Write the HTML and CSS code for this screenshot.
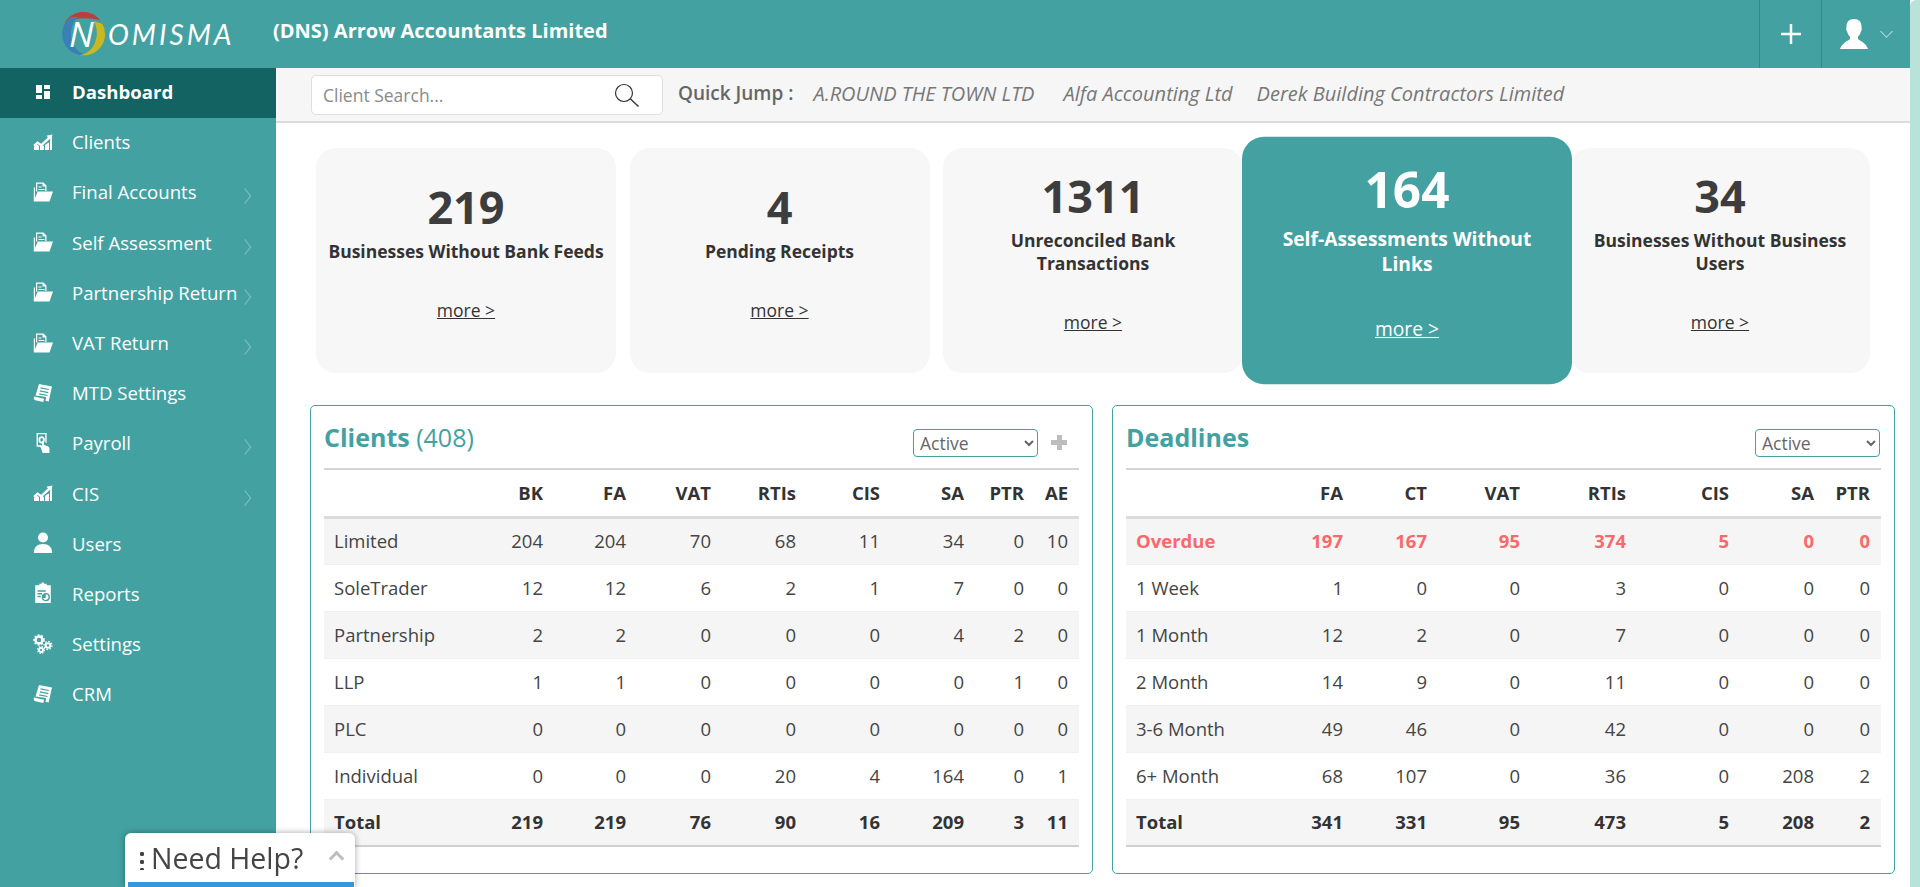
FILE: index.html
```html
<!DOCTYPE html>
<html lang="en">
<head>
    <meta charset="UTF-8">
    <meta name="viewport" content="width=device-width, initial-scale=1.0">
    <title>Nomisma Dashboard</title>
    <link rel="stylesheet" href="styles.css">
</head>
<body>
    <!-- Icon sprite -->
    <svg class="sprite" xmlns="http://www.w3.org/2000/svg">
        <symbol id="i-dash" viewBox="0 0 20 20">
            <path d="M3 3h6v8H3zM11 3h6v4h-6zM11 9h6v8h-6zM3 13h6v4H3z"/>
        </symbol>
        <symbol id="i-chart" viewBox="0 0 20 20">
            <path d="M1 18v-3l3-2.500L6 14v4zM7 18v-4l2-1 2 1v4zM12 18v-5l2-1.500 2-1V18zM17 18V8l2-1V18z"/>
            <path d="M.4 13l4-3.800 3.800 2.600 6.800-6.500-1.600-1.600 6-1.200-.9 6-1.700-1.600-8.500 7.800-3.800-2.700-3 2.700z"/>
        </symbol>
        <symbol id="i-folder" viewBox="0 0 20 20">
            <path class="faint" d="M3 .5h7.500l3 3V9h-1.200V4.500H9.500V1.700H4.200V9.500H3zM5.500 4.500h3v1h-3zM5.500 7h6v1h-6z"/>
            <path d="M.8 5.500H2V16l2.700-6.500H20L16.500 19.500H.8z"/>
        </symbol>
        <symbol id="i-receipt" viewBox="0 0 20 20">
            <path fill-rule="evenodd" d="M6 1l13 2.500-3.300 15-3.300-.7.700-2.300c.2-1-.5-1.500-1.300-1.700L2.500 12.500zM7.600 4.200l-.3 1.200 8.400 1.700.3-1.200zM7 7.300l-.3 1.200 8.400 1.700.3-1.200zM6.300 10.200L6 11.400l8.400 1.700.3-1.200z"/>
            <path d="M1 13.500l10 2.200-.7 3.300-8-1.700C.8 16.800.4 15 1 13.500z"/>
        </symbol>
        <symbol id="i-pay" viewBox="0 0 20 24">
            <path fill-rule="evenodd" d="M3 1h11v11l-1.500-.8V2.500H4.500v12H7V16H3zM8.500 4.500a3.500 4 0 1 1 0 8 3.500 4 0 0 1 0-8zM8.500 6.500a1.500 2 0 1 0 0 4 1.500 2 0 0 0 0-4z"/>
            <path d="M9 10.500c0-1 2-1 2 0V14l4 1.500c1.200.5 2 1.200 2 2.500v5H9.500L8 18l-1.500-2.500c-.4-1 1-1.800 1.700-1l.8 1z"/>
        </symbol>
        <symbol id="i-user" viewBox="0 0 20 24">
            <circle cx="10" cy="6" r="5.500"/>
            <path d="M0 23c0-7 4-10 10-10s10 3 10 10z"/>
        </symbol>
        <symbol id="i-report" viewBox="0 0 20 24">
            <path fill-rule="evenodd" d="M1.500 3.500H6V2h2.500V.5H11V2h3v1.500h4.500V23h-17zM4 9v1.500h9V9zM4 12v1.500h5V12zM4 15v1.500h3.500V15zM13 12a4.500 4.500 0 1 0 0 9 4.500 4.500 0 0 0 0-9zM13 13.500a3 3 0 1 1-2.800 4h2.800z"/>
        </symbol>
        <symbol id="i-gears" viewBox="0 0 20 20">
            <g fill="none" stroke="#fff">
                <circle cx="6" cy="6" r="3.500" stroke-width="2.500"/>
                <circle cx="6" cy="6" r="5" stroke-width="1.500" stroke-dasharray="1.800 1.800"/>
                <circle cx="15" cy="11.500" r="2.300" stroke-width="2"/>
                <circle cx="15" cy="11.500" r="4" stroke-width="1.300" stroke-dasharray="1.500 1.600"/>
                <circle cx="8" cy="16" r="2" stroke-width="1.800"/>
                <circle cx="8" cy="16" r="3.400" stroke-width="1.200" stroke-dasharray="1.400 1.300"/>
            </g>
        </symbol>
    </svg>

    <div class="page">
        <header class="topbar">
            <div class="logo">
                <svg class="logo-ring" viewBox="0 0 44 44" xmlns="http://www.w3.org/2000/svg">
                    <path fill="#b9403f" d="M3 11A21.500 21.500 0 0 1 39 8.500C28 5 14 5 3 11z"/>
                    <path fill="#3a80b4" d="M9 5A21.500 21.500 0 0 0 25 43.300C15 40 9.500 32 9.500 22 9.500 15 12 9 17 5z"/>
                    <path fill="#c9b81f" d="M41 12A21.500 21.500 0 0 1 18 43.200C27 42 33.500 35 35 25 36 19 35 14 32 9z"/>
                </svg>
                <span class="logo-n">N</span>
                <span class="logo-text">OMISMA</span>
            </div>
            <div class="company">(DNS) Arrow Accountants Limited</div>
            <div class="topbar-btn topbar-plus">
                <svg width="20" height="20" viewBox="0 0 20 20" xmlns="http://www.w3.org/2000/svg"><path d="M10 0v20M0 10h20" stroke="#fff" stroke-width="2.500"/></svg>
            </div>
            <div class="topbar-btn topbar-user">
                <svg width="28" height="30" viewBox="0 0 28 30" xmlns="http://www.w3.org/2000/svg">
                    <path fill="#fff" d="M14 0c5 0 7.500 3 7.500 7.500 0 1.500.5 2 .2 3.500-.3 1-.8 1.300-1 2-.5 2-1.500 3.500-2.700 4.500v2.500c3 2.500 7.500 3.500 10 10H0c2.500-6.500 7-7.500 10-10v-2.500c-1.200-1-2.200-2.500-2.700-4.500-.2-.7-.7-1-1-2-.3-1.500.2-2 .2-3.500C6.500 3 9 0 14 0z"/>
                </svg>
                <span class="chev-down"></span>
            </div>
        </header>

        <div class="layout">
            <nav class="sidebar">
                <a class="nav-item active"><svg class="nav-icon"><use href="#i-dash"/></svg>Dashboard</a>
                <a class="nav-item"><svg class="nav-icon"><use href="#i-chart"/></svg>Clients</a>
                <a class="nav-item"><svg class="nav-icon"><use href="#i-folder"/></svg>Final Accounts<span class="chev"></span></a>
                <a class="nav-item"><svg class="nav-icon"><use href="#i-folder"/></svg>Self Assessment<span class="chev"></span></a>
                <a class="nav-item"><svg class="nav-icon"><use href="#i-folder"/></svg>Partnership Return<span class="chev"></span></a>
                <a class="nav-item"><svg class="nav-icon"><use href="#i-folder"/></svg>VAT Return<span class="chev"></span></a>
                <a class="nav-item"><svg class="nav-icon"><use href="#i-receipt"/></svg>MTD Settings</a>
                <a class="nav-item"><svg class="nav-icon"><use href="#i-pay"/></svg>Payroll<span class="chev"></span></a>
                <a class="nav-item"><svg class="nav-icon"><use href="#i-chart"/></svg>CIS<span class="chev"></span></a>
                <a class="nav-item"><svg class="nav-icon"><use href="#i-user"/></svg>Users</a>
                <a class="nav-item"><svg class="nav-icon"><use href="#i-report"/></svg>Reports</a>
                <a class="nav-item"><svg class="nav-icon"><use href="#i-gears"/></svg>Settings</a>
                <a class="nav-item"><svg class="nav-icon"><use href="#i-receipt"/></svg>CRM</a>
            </nav>

            <main class="content">
                <!-- Search and quick jump -->
                <div class="subbar">
                    <div class="search">
                        <input class="search-input" type="text" placeholder="Client Search...">
                        <svg width="26" height="24" viewBox="0 0 26 24" xmlns="http://www.w3.org/2000/svg">
                            <circle cx="10" cy="10" r="8.500" fill="none" stroke="#333" stroke-width="1.200"/>
                            <path d="M16.500 16l8 7.500" stroke="#333" stroke-width="1.400"/>
                        </svg>
                    </div>
                    <span class="jump-label">Quick Jump :</span>
                    <a class="jump-link">A.ROUND THE TOWN LTD</a>
                    <a class="jump-link">Alfa Accounting Ltd</a>
                    <a class="jump-link">Derek Building Contractors Limited</a>
                </div>

                <!-- Cards -->
                <section class="cards">
                    <div class="card">
                        <div class="card-num">219</div>
                        <div class="card-label">Businesses Without Bank Feeds</div>
                        <a class="card-more">more &gt;</a>
                    </div>
                    <div class="card">
                        <div class="card-num">4</div>
                        <div class="card-label">Pending Receipts</div>
                        <a class="card-more">more &gt;</a>
                    </div>
                    <div class="card">
                        <div class="card-num">1311</div>
                        <div class="card-label">Unreconciled Bank<br>Transactions</div>
                        <a class="card-more">more &gt;</a>
                    </div>
                    <div class="card card-active">
                        <div class="card-num">164</div>
                        <div class="card-label">Self-Assessments Without<br>Links</div>
                        <a class="card-more">more &gt;</a>
                    </div>
                    <div class="card">
                        <div class="card-num">34</div>
                        <div class="card-label">Businesses Without Business<br>Users</div>
                        <a class="card-more">more &gt;</a>
                    </div>
                </section>

                <!-- Tables -->
                <section class="panels">
                    <div class="panel">
                        <div class="panel-head">
                            <h2 class="panel-title">Clients <span class="panel-count">(408)</span></h2>
                            <select class="panel-select"><option>Active</option></select>
                            <span class="panel-plus"></span>
                        </div>
                        <table class="grid grid-clients">
                            <thead>
                                <tr><th></th><th>BK</th><th>FA</th><th>VAT</th><th>RTIs</th><th>CIS</th><th>SA</th><th>PTR</th><th>AE</th></tr>
                            </thead>
                            <tbody>
                                <tr><td>Limited</td><td>204</td><td>204</td><td>70</td><td>68</td><td>11</td><td>34</td><td>0</td><td>10</td></tr>
                                <tr><td>SoleTrader</td><td>12</td><td>12</td><td>6</td><td>2</td><td>1</td><td>7</td><td>0</td><td>0</td></tr>
                                <tr><td>Partnership</td><td>2</td><td>2</td><td>0</td><td>0</td><td>0</td><td>4</td><td>2</td><td>0</td></tr>
                                <tr><td>LLP</td><td>1</td><td>1</td><td>0</td><td>0</td><td>0</td><td>0</td><td>1</td><td>0</td></tr>
                                <tr><td>PLC</td><td>0</td><td>0</td><td>0</td><td>0</td><td>0</td><td>0</td><td>0</td><td>0</td></tr>
                                <tr><td>Individual</td><td>0</td><td>0</td><td>0</td><td>20</td><td>4</td><td>164</td><td>0</td><td>1</td></tr>
                                <tr class="row-total"><td>Total</td><td>219</td><td>219</td><td>76</td><td>90</td><td>16</td><td>209</td><td>3</td><td>11</td></tr>
                            </tbody>
                        </table>
                    </div>

                    <div class="panel">
                        <div class="panel-head">
                            <h2 class="panel-title">Deadlines</h2>
                            <select class="panel-select"><option>Active</option></select>
                        </div>
                        <table class="grid grid-deadlines">
                            <thead>
                                <tr><th></th><th>FA</th><th>CT</th><th>VAT</th><th>RTIs</th><th>CIS</th><th>SA</th><th>PTR</th></tr>
                            </thead>
                            <tbody>
                                <tr class="row-overdue"><td>Overdue</td><td>197</td><td>167</td><td>95</td><td>374</td><td>5</td><td>0</td><td>0</td></tr>
                                <tr><td>1 Week</td><td>1</td><td>0</td><td>0</td><td>3</td><td>0</td><td>0</td><td>0</td></tr>
                                <tr><td>1 Month</td><td>12</td><td>2</td><td>0</td><td>7</td><td>0</td><td>0</td><td>0</td></tr>
                                <tr><td>2 Month</td><td>14</td><td>9</td><td>0</td><td>11</td><td>0</td><td>0</td><td>0</td></tr>
                                <tr><td>3-6 Month</td><td>49</td><td>46</td><td>0</td><td>42</td><td>0</td><td>0</td><td>0</td></tr>
                                <tr><td>6+ Month</td><td>68</td><td>107</td><td>0</td><td>36</td><td>0</td><td>208</td><td>2</td></tr>
                                <tr class="row-total"><td>Total</td><td>341</td><td>331</td><td>95</td><td>473</td><td>5</td><td>208</td><td>2</td></tr>
                            </tbody>
                        </table>
                    </div>
                </section>
            </main>
        </div>
    </div>

    <div class="scroll-rail"></div>

    <!-- Help widget -->
    <div class="help">
        <span class="help-dots"></span>
        <span class="help-text">Need Help?</span>
        <span class="help-chev"></span>
    </div>
</body>
</html>
```

FILE: styles.css
```css
/* General */
* {
    box-sizing: border-box;
}

html, body {
    height: 100%;
}

body {
    margin: 0;
    display: flex;
    overflow: hidden;
    background-color: white;
    color: #333;
    font-family: "Open Sans", "Liberation Sans", sans-serif;
}

.sprite {
    display: none;
}

.page {
    flex: 1;
    min-width: 0;
    display: flex;
    flex-direction: column;
}

.scroll-rail {
    width: 10px;
    background-color: #b9e3d8;
    border-top-left-radius: 6px;
}

/* Top bar */
.topbar {
    height: 68px;
    flex-shrink: 0;
    display: flex;
    align-items: stretch;
    background-color: #43a1a1;
    color: white;
}

.logo {
    width: 273px;
    padding-left: 61px;
    display: flex;
    align-items: center;
    position: relative;
}

.logo-ring {
    width: 45px;
    height: 44px;
}

.logo-n {
    position: absolute;
    left: 69px;
    top: 17px;
    font-style: italic;
    font-size: 35px;
    line-height: 34px;
    color: #fff;
}

.logo-text {
    margin-left: 2px;
    font-family: Lato, sans-serif;
    font-style: italic;
    font-size: 28px;
    letter-spacing: 3px;
    color: #fff;
}

.company {
    flex: 1;
    align-self: center;
    padding-bottom: 8px;
    font-size: 20px;
    font-weight: 700;
}

.topbar-btn {
    display: flex;
    align-items: center;
    border-left: 1px solid #2f8b8c;
}

.topbar-plus {
    width: 62px;
    justify-content: center;
}

.topbar-user {
    width: 89px;
    padding-left: 18px;
    gap: 14px;
}

.chev-down {
    width: 9px;
    height: 9px;
    margin-top: -6px;
    border-right: 1.500px solid #b5dcdc;
    border-bottom: 1.500px solid #b5dcdc;
    transform: rotate(45deg);
}

/* Layout */
.layout {
    flex: 1;
    min-height: 0;
    display: flex;
}

/* Sidebar */
.sidebar {
    width: 276px;
    flex-shrink: 0;
    background-color: #43a1a1;
}

.nav-item {
    height: 50.2px;
    padding: 0 26px 3px 33px;
    display: flex;
    align-items: center;
    color: white;
    font-size: 18.6px;
}

.nav-item.active {
    background-color: #136363;
    font-weight: 700;
}

.nav-icon {
    width: 20px;
    height: 22px;
    margin-right: 19px;
    flex-shrink: 0;
    fill: white;
}

.nav-icon .faint {
    fill: #d5ecec;
}

.chev {
    width: 10px;
    height: 10px;
    margin-left: auto;
    margin-top: 9px;
    flex-shrink: 0;
    border-top: 1px solid #86c3c3;
    border-right: 1px solid #86c3c3;
    transform: rotate(45deg) skew(8deg, 8deg);
}

/* Search bar */
.content {
    flex: 1;
    min-width: 0;
}

.subbar {
    height: 55px;
    padding: 7px 0 0 35px;
    display: flex;
    align-items: flex-start;
    background-color: #f6f6f6;
    border-bottom: 2px solid #dcdcdc;
}

.search {
    width: 352px;
    height: 40px;
    padding: 0 22px 0 11px;
    display: flex;
    align-items: center;
    background: white;
    border: 1px solid #dedede;
    border-radius: 5px;
}

.search-input {
    flex: 1;
    min-width: 0;
    padding: 0;
    border: none;
    outline: none;
    font-family: inherit;
    font-size: 17.5px;
}

.search-input::placeholder {
    color: #8a8a8a;
    opacity: 1;
}

.jump-label {
    margin: 5px 20px 0 15px;
    font-size: 19px;
    font-weight: 600;
    color: #666;
}

.jump-link {
    margin: 5px 24px 0 0;
    font-size: 20px;
    font-style: italic;
    color: #777;
}

.jump-link:first-of-type {
    margin-right: 29px;
}

/* Cards */
.cards {
    padding: 25px 40px 0;
    display: grid;
    grid-template-columns: repeat(5, 300px);
    justify-content: space-between;
}

.card {
    height: 225px;
    padding: 0 10px 18px;
    display: flex;
    flex-direction: column;
    align-items: center;
    justify-content: center;
    text-align: center;
    background-color: #f7f7f7;
    border-radius: 20px;
    color: #333;
}

.card-num {
    font-size: 45px;
    font-weight: 700;
    line-height: 50px;
    color: #3d3d3d;
}

.card-label {
    margin-top: 8px;
    font-size: 17.5px;
    font-weight: 700;
    line-height: 23px;
}

.card-more {
    margin-top: 36px;
    font-size: 17.5px;
    line-height: 22px;
    text-decoration: underline;
}

.card-active {
    position: relative;
    z-index: 1;
    transform: scale(1.1);
    background-color: #43a1a1;
    color: white;
}

.card-active .card-num {
    color: white;
}

/* Panels */
.panels {
    margin-top: 32px;
    padding: 0 15px 0 34px;
    display: grid;
    grid-template-columns: 783px 783px;
    justify-content: space-between;
}

.panel {
    height: 469px;
    padding: 0 13px;
    border: 1px solid #43a1a1;
    border-radius: 5px;
}

.panel-head {
    height: 64px;
    display: flex;
    align-items: flex-start;
    border-bottom: 2px solid #d4d4d4;
}

.panel-title {
    flex: 1;
    margin: 15px 0 0;
    font-size: 25px;
    font-weight: 700;
    line-height: 32px;
    color: #43a1a1;
}

.panel-count {
    font-weight: 400;
}

.panel-select {
    width: 125px;
    height: 28px;
    margin-top: 23px;
    padding: 0 2px;
    background: white;
    border: 1px solid #43a1a1;
    border-radius: 4px;
    font-family: inherit;
    font-size: 17.5px;
    color: #666;
}

.panel-select:last-child {
    margin-right: 1px;
}

.panel-plus {
    width: 16px;
    height: 15px;
    margin: 29px 12px 0 13px;
    background:
        linear-gradient(#bdbdbd, #bdbdbd) center / 100% 5px no-repeat,
        linear-gradient(#bdbdbd, #bdbdbd) center / 5px 100% no-repeat;
}

/* Tables */
.grid {
    width: 100%;
    table-layout: fixed;
    border-collapse: collapse;
    font-size: 18.5px;
    color: #444;
}

.grid th,
.grid td {
    height: 47px;
    padding: 0 11px 0 0;
    text-align: right;
}

.grid th {
    font-weight: 700;
    color: #333;
    border-bottom: 3px solid #dcdcdc;
}

.grid td {
    padding-bottom: 1px;
    border-bottom: 1px solid #f0f0f0;
}

.grid td:first-child {
    padding-left: 10px;
    text-align: left;
}

.grid tbody tr:nth-child(odd) {
    background-color: #f5f5f5;
}

.row-total td {
    font-weight: 700;
    color: #333;
    border-bottom: 2px solid #cfcfcf;
}

.row-overdue td {
    font-weight: 700;
    color: #f8696b;
}

.grid-clients th:nth-child(1) { width: 147px; }
.grid-clients th:nth-child(2) { width: 83px; }
.grid-clients th:nth-child(3) { width: 83px; }
.grid-clients th:nth-child(4) { width: 85px; }
.grid-clients th:nth-child(5) { width: 85px; }
.grid-clients th:nth-child(6) { width: 84px; }
.grid-clients th:nth-child(7) { width: 84px; }
.grid-clients th:nth-child(8) { width: 60px; }
.grid-clients th:nth-child(9) { width: 44px; }

.grid-deadlines th:nth-child(1) { width: 144px; }
.grid-deadlines th:nth-child(2) { width: 84px; }
.grid-deadlines th:nth-child(3) { width: 84px; }
.grid-deadlines th:nth-child(4) { width: 93px; }
.grid-deadlines th:nth-child(5) { width: 106px; }
.grid-deadlines th:nth-child(6) { width: 103px; }
.grid-deadlines th:nth-child(7) { width: 85px; }
.grid-deadlines th:nth-child(8) { width: 56px; }

/* Help widget */
.help {
    position: fixed;
    left: 125px;
    bottom: 0;
    width: 230px;
    height: 54px;
    padding: 0 13px 5px 15px;
    display: flex;
    align-items: center;
    background: white;
    border-radius: 6px 6px 0 0;
    box-shadow: 0 0 6px rgba(0, 0, 0, 0.35);
    color: #444;
}

.help::after {
    content: "";
    position: absolute;
    left: 3px;
    right: 1px;
    bottom: 0;
    height: 5px;
    background-color: #3498db;
}

.help-dots {
    width: 4px;
    height: 20px;
    margin: 4px 7px 0 0;
    background: radial-gradient(circle, #444 2px, transparent 2.300px) center top / 4px 8px repeat-y;
}

.help-text {
    flex: 1;
    font-size: 28.5px;
    white-space: nowrap;
}

.help-chev {
    width: 11px;
    height: 11px;
    margin-top: 2px;
    border-top: 3px solid #bdbdbd;
    border-left: 3px solid #bdbdbd;
    transform: rotate(45deg);
}
```
